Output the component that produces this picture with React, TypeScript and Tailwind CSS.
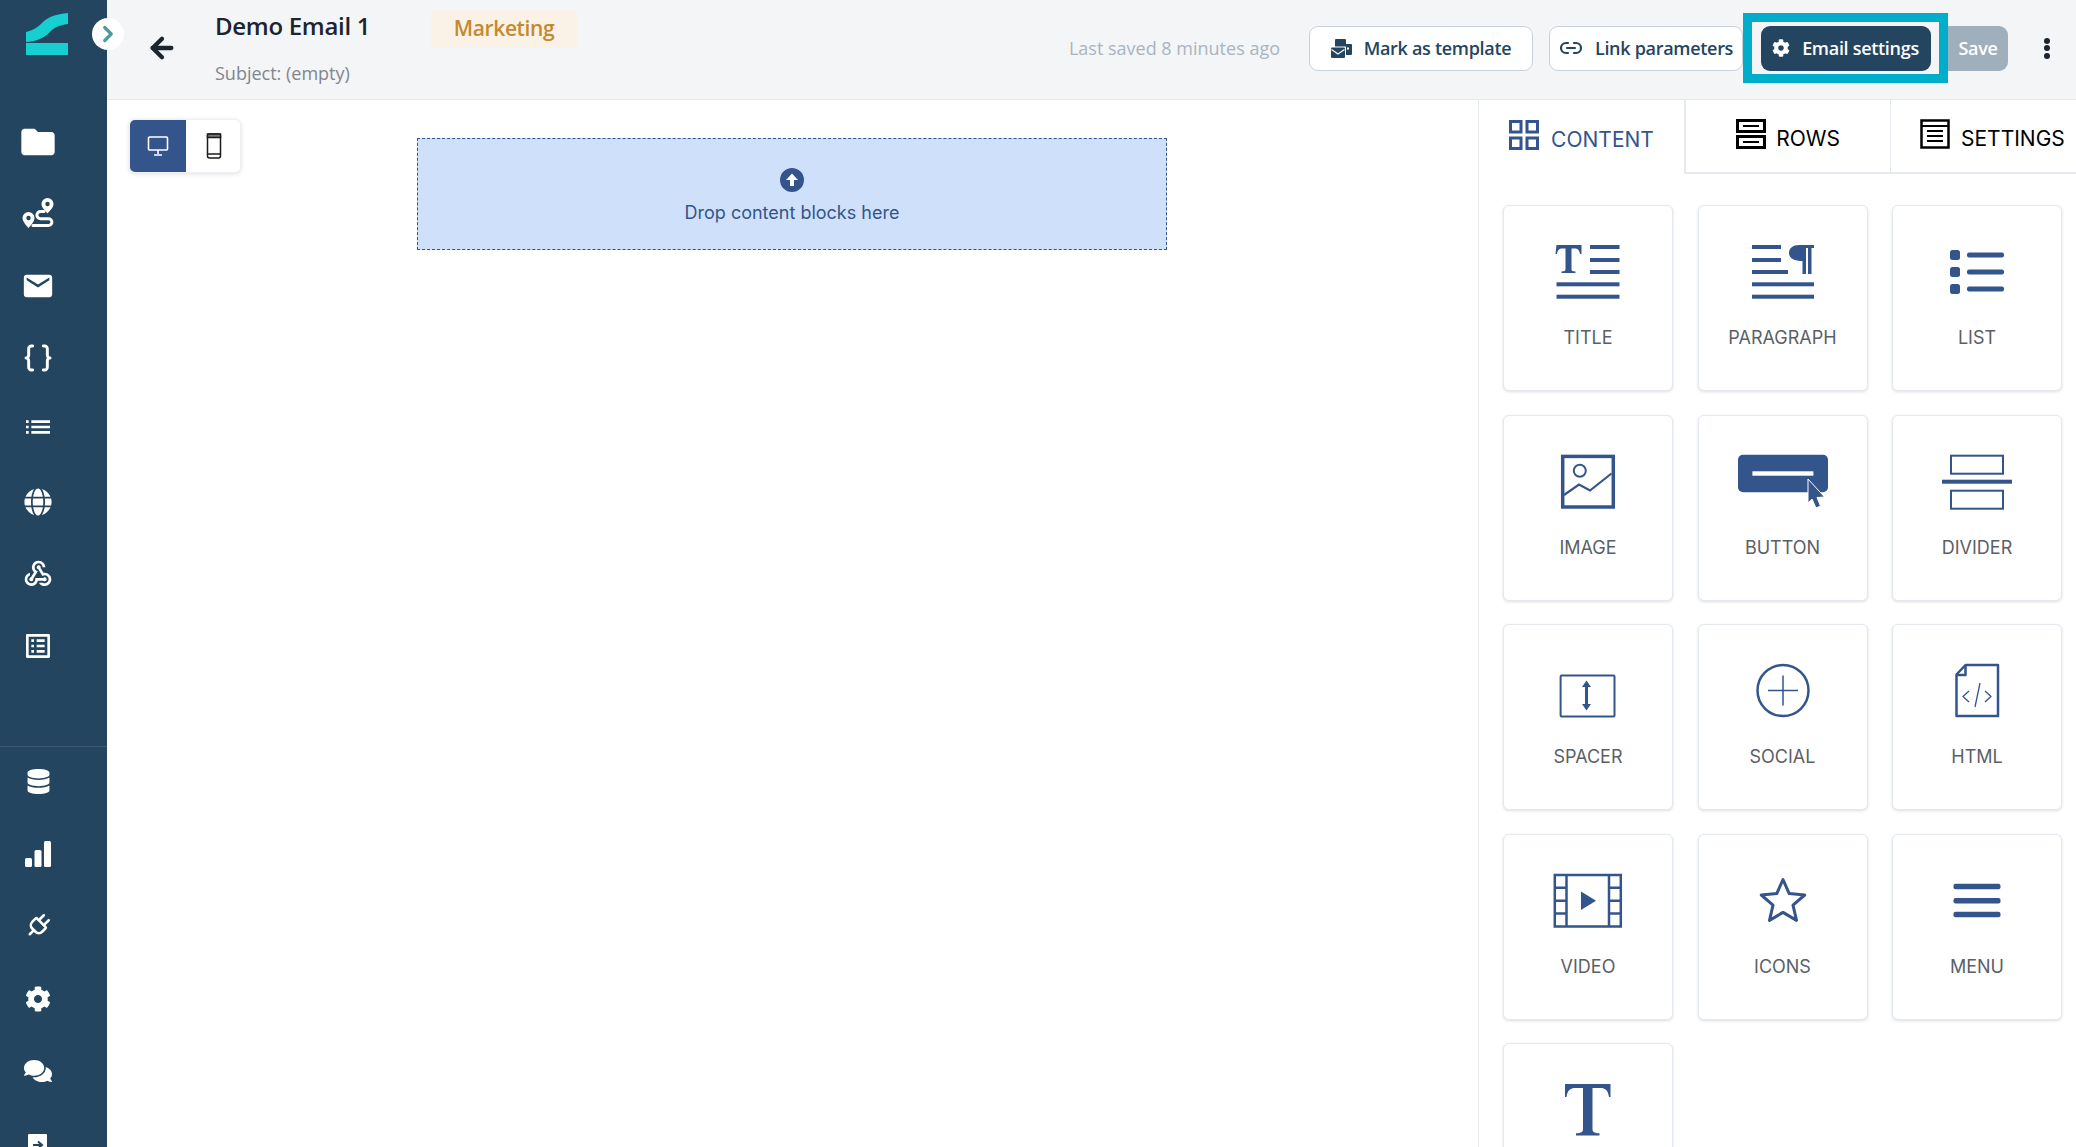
import React from 'react';
import { ArrowLeft, Braces, ChevronRight, Link2, Plug } from 'lucide-react';
import { FaCog, FaComments, FaDatabase, FaGlobe } from 'react-icons/fa';
import { MdEmail, MdFolder, MdList, MdOutlineListAlt, MdWebhook } from 'react-icons/md';

const BLUE = '#34558b';

const RouteIcon = () => (
  <svg viewBox="0 0 32 32" className="h-[32px] w-[32px]" fill="none">
    <path d="M6.5 14a6 6 0 0 0-6 6c0 3.6 4 7.6 6 10 2-2.4 6-6.4 6-10a6 6 0 0 0-6-6Z" fill="#fff" />
    <circle cx="6.5" cy="20" r="2.2" fill="#24455f" />
    <path d="M25.500 0a6 6 0 0 0-6 6c0 3.600 4 7 6 9.500 2-2.500 6-5.900 6-9.500a6 6 0 0 0-6-6Z" fill="#fff" />
    <circle cx="25.500" cy="6" r="2.200" fill="#24455f" />
    <path d="M22 13.500h-3.500a3.600 3.600 0 0 0 0 7.200h8a2.800 2.800 0 0 1 0 6.800H11" stroke="#fff" strokeWidth="3" strokeLinecap="round" />
  </svg>
);

const BarsIcon = () => (
  <svg viewBox="0 0 28 28" className="h-[28px] w-[28px]" fill="#fff">
    <rect x="1" y="18" width="7" height="9" rx="1.500" />
    <rect x="10.500" y="10" width="7" height="17" rx="1.500" />
    <rect x="20" y="1" width="7" height="26" rx="1.500" />
  </svg>
);

const ExitIcon = () => (
  <svg viewBox="0 0 20 20" className="h-[20px] w-[20px]">
    <rect x="0" y="0" width="19" height="20" rx="1" fill="#fff" />
    <path d="M5 11h8M10 7.500l4 3.500-4 3.500" stroke="#24455f" strokeWidth="2" fill="none" />
  </svg>
);

const Logo = () => (
  <svg viewBox="0 0 42 42" className="h-[42px] w-[42px]" fill="#15cfd0">
    <path d="M0 19C8 17 12 14 17 9 22 4 30 1 42 0v11C33 12 27 15 23 20 17 26 9 28.500 0 29Z" />
    <rect x="0" y="30" width="42" height="12" />
  </svg>
);

const TemplateIcon = () => (
  <svg viewBox="0 0 21 19" className="h-[19px] w-[21px]" fill="#24455f">
    <path d="M4 1a1 1 0 0 1 1-1h9a1 1 0 0 1 1 1v4h5a1 1 0 0 1 1 1v9a1 1 0 0 1-1 1h-5V7.500H4Z" />
    <rect x="0" y="8.500" width="14" height="10.500" rx="1" />
    <path d="M0.500 10.500 7 15l6.500-4.500" stroke="#fff" strokeWidth="1.200" fill="none" />
    <rect x="16" y="8.500" width="2" height="2" fill="#fff" />
  </svg>
);

const ContentTabIcon = ({ color }: { color: string }) => (
  <svg viewBox="0 0 30 30" className="h-[30px] w-[30px] -translate-y-[5px]" fill="none" stroke={color} strokeWidth="3">
    <rect x="1.500" y="1.500" width="10.500" height="10.500" />
    <rect x="18" y="1.500" width="10.500" height="10.500" />
    <rect x="1.500" y="18" width="10.500" height="10.500" />
    <rect x="18" y="18" width="10.500" height="10.500" />
  </svg>
);

const RowsTabIcon = () => (
  <svg viewBox="0 0 30 30" className="h-[30px] w-[30px] -translate-y-[5px]" fill="none" stroke="#000" strokeWidth="3">
    <rect x="1.500" y="1.500" width="27" height="11" />
    <rect x="1.500" y="17.500" width="27" height="11" />
    <path d="M7 7h16M7 23h16" strokeWidth="2" />
  </svg>
);

const SettingsTabIcon = () => (
  <svg viewBox="0 0 30 30" className="h-[30px] w-[30px] -translate-y-[5px]" fill="none" stroke="#000" strokeWidth="2.500">
    <rect x="1.500" y="1.500" width="27" height="27" />
    <path d="M1.500 7h27" strokeWidth="2" />
    <path d="M7 12h16M7 17h16M7 22h16" strokeWidth="2" />
  </svg>
);

const IconBox = ({ children }: { children: React.ReactNode }) => (
  <svg viewBox="0 0 100 76" className="h-[76px] w-[100px]" fill={BLUE}>{children}</svg>
);

const Lines = () => (
  <>
    <rect x="19" y="48.300" width="62" height="4" />
    <rect x="19" y="60.700" width="62" height="4" />
  </>
);

const blockIcons: Record<string, React.ReactNode> = {
  TITLE: (
    <>
      <path d="M18.500 11h25v9h-1.500c-.5-3.500-2-5.500-5.500-5.500h-3V35c0 2 1 2.300 4 2.500V39h-14v-1.500c3-.2 4-.5 4-2.500V14.500h-3c-3.500 0-5 2-5.500 5.500h-1.500Z" />
      <rect x="52" y="11" width="29.500" height="4" />
      <rect x="52" y="24" width="29.500" height="4" />
      <rect x="52" y="36" width="29.500" height="4" />
      <rect x="18.500" y="48.300" width="63" height="4" />
      <rect x="18.500" y="60.700" width="63" height="4" />
    </>
  ),
  PARAGRAPH: (
    <>
      <rect x="19" y="11" width="29" height="4" />
      <rect x="19" y="24" width="29" height="4" />
      <rect x="19" y="36" width="36" height="4" />
      <path d="M66 11h15v3h-2.500v26H75V14h-2v26h-3.500V27C61 27 56 24 56 19c0-5 4-8 10-8Z" />
      <Lines />
    </>
  ),
  LIST: (
    <>
      <rect x="23" y="16" width="10" height="10" rx="2.500" />
      <rect x="23" y="33" width="10" height="10" rx="2.500" />
      <rect x="23" y="50" width="10" height="10" rx="2.500" />
      <rect x="40" y="18.500" width="37" height="5" rx="2" />
      <rect x="40" y="35.500" width="37" height="5" rx="2" />
      <rect x="40" y="52.500" width="37" height="5" rx="2" />
    </>
  ),
  IMAGE: (
    <g fill="none" stroke={BLUE}>
      <rect x="24.700" y="12.400" width="50.600" height="50.600" strokeWidth="3.500" />
      <circle cx="41.800" cy="26.700" r="6" strokeWidth="2" />
      <path d="M26 51l15-10.500 11 6 21.500-17" strokeWidth="2.200" />
    </g>
  ),
  BUTTON: (
    <>
      <rect x="5" y="10.700" width="90" height="37.600" rx="5" />
      <rect x="19.400" y="27.300" width="61" height="4.400" fill="#fff" />
      <path d="M75 35 91.500 53 84 53.500 87.500 62 83 64 79 55 75 59Z" stroke="#fff" strokeWidth="1" />
    </>
  ),
  DIVIDER: (
    <>
      <rect x="24" y="11.700" width="52" height="18" fill="none" stroke={BLUE} strokeWidth="2" />
      <rect x="15" y="35.700" width="70" height="4" />
      <rect x="24" y="46.700" width="52" height="18" fill="none" stroke={BLUE} strokeWidth="2" />
    </>
  ),
  SPACER: (
    <>
      <rect x="22.600" y="22.400" width="53.900" height="41" fill="none" stroke={BLUE} strokeWidth="2" rx="1" />
      <path d="M48.500 27.500 53 34h-3v17h3l-4.500 6.500L44 51h3V34h-3Z" />
    </>
  ),
  SOCIAL: (
    <g fill="none" stroke={BLUE}>
      <circle cx="50" cy="37.500" r="25.500" strokeWidth="2.500" />
      <path d="M35 37.500h30M50 22.500v30" strokeWidth="1.500" />
    </g>
  ),
  HTML: (
    <g fill="none" stroke={BLUE} strokeLinejoin="round">
      <path d="M38.500 12H71v51H29.500V21.500Z" strokeWidth="2.500" />
      <path d="M38.500 12v10h-9" strokeWidth="2.500" />
      <path d="M42 38l-6 5.500 6 5.500M58 38l6 5.500-6 5.500M53 30l-5 24" strokeWidth="1.300" />
    </g>
  ),
  VIDEO: (
    <>
      <g fill="none" stroke={BLUE} strokeWidth="2.500">
        <rect x="16.800" y="12" width="66" height="51.500" />
        <path d="M28.500 12v51.500M71 12v51.500M16.800 24.800h11.700M16.800 37.700h11.700M16.800 50.600h11.700M71 24.800h11.800M71 37.700h11.800M71 50.600h11.800" />
      </g>
      <path d="M43 28.500 58 37.700 43 47Z" />
    </>
  ),
  ICONS: (
    <path d="M50 16.500 56.200 30.600 71.700 32 60 42.100 63.500 57.400 50 49.400 36.500 57.400 40 42.100 28.300 32 43.800 30.600Z" fill="none" stroke={BLUE} strokeWidth="3" strokeLinejoin="round" />
  ),
  MENU: (
    <>
      <rect x="26.500" y="20.700" width="47" height="5.500" rx="2" />
      <rect x="26.500" y="35" width="47" height="5.500" rx="2" />
      <rect x="26.500" y="48.700" width="47" height="5.500" rx="2" />
    </>
  ),
  FONT: (
    <path d="M27 12h45.500v13h-1.500c-1-6.500-3.500-9-9-9h-7.500v41c0 3 1.500 4 7 4.300v2.200H38v-2.200c5.500-.3 7-1.300 7-4.300V16h-7.500c-5.500 0-8 2.500-9 9H27Z" />
  ),
};

const blocks = ['TITLE', 'PARAGRAPH', 'LIST', 'IMAGE', 'BUTTON', 'DIVIDER', 'SPACER', 'SOCIAL', 'HTML', 'VIDEO', 'ICONS', 'MENU'];

const BlockCard = ({ name, label }: { name: string; label?: string }) => (
  <div className="flex h-[186px] flex-col items-center rounded-[6px] border border-[#e4e8ef] bg-white pt-[28px] shadow-[0_1px_3px_rgba(40,50,70,0.16)]">
    <IconBox>{blockIcons[name]}</IconBox>
    {label && <div className="mt-[17px] font-['Inter'] text-[18px] leading-[22px] text-[#5b5f66]">{label}</div>}
  </div>
);

const topNav = [
  <MdFolder key="folder" className="h-[40px] w-[40px]" />,
  <RouteIcon key="route" />,
  <MdEmail key="mail" className="h-[34px] w-[34px]" />,
  <Braces key="braces" className="h-[32px] w-[32px]" strokeWidth={2.2} />,
  <MdList key="list" className="h-[32px] w-[32px] -translate-y-[3px]" />,
  <FaGlobe key="globe" className="h-[28px] w-[28px]" />,
  <MdWebhook key="webhook" className="h-[32px] w-[32px]" />,
  <MdOutlineListAlt key="table" className="h-[32px] w-[32px]" />,
];

const bottomNav = [
  <FaDatabase key="db" className="h-[25px] w-[25px]" />,
  <BarsIcon key="bars" />,
  <Plug key="plug" className="h-[28px] w-[28px] rotate-45" strokeWidth={2.2} />,
  <FaCog key="gear" className="h-[26px] w-[26px]" />,
  <FaComments key="chat" className="h-[28px] w-[28px]" />,
  <ExitIcon key="exit" />,
];

export default function App() {
  return (
    <div className="relative flex h-screen w-full overflow-hidden bg-white font-['Open_Sans',sans-serif]">
      <aside className="flex w-[107px] shrink-0 flex-col bg-[#24455f] text-white">
        <div className="ml-[26px] mt-[13px] h-[42px] w-[42px]">
          <Logo />
        </div>
        <div className="mt-[51px] flex w-[76px] flex-col items-center">
          {topNav.map((icon, i) => (
            <div key={i} className="flex h-[72px] w-full items-center justify-center">{icon}</div>
          ))}
        </div>
        <div className="mt-[64px] w-full border-t border-[#3c5a73]" />
        <div className="-mt-[2px] flex w-[76px] flex-col items-center">
          {bottomNav.map((icon, i) => (
            <div key={i} className="flex h-[72.500px] w-full shrink-0 items-center justify-center">{icon}</div>
          ))}
        </div>
      </aside>

      {/* collapse handle sits over the sidebar edge */}
      <div className="absolute left-[92px] top-[18px] z-10 flex h-[32px] w-[32px] items-center justify-center rounded-full bg-white">
        <ChevronRight className="h-[26px] w-[26px] text-[#4f9a9c]" strokeWidth={3} />
      </div>

      <div className="flex min-w-0 flex-1 flex-col">
        <header className="flex h-[100px] shrink-0 border-b border-[#e6e9ed] bg-[#f4f5f7] pl-[39px]">
          <div className="flex h-[95px] items-center">
            <ArrowLeft className="h-[32px] w-[32px] text-[#1c2430]" strokeWidth={3.2} />
          </div>
          <div className="ml-[37px] w-[216px] shrink-0">
            <div className="mt-[10px] text-[24px] font-semibold leading-[32px] tracking-[-0.3px] text-[#1c2430]">Demo Email 1</div>
            <div className="mt-[18px] text-[18px] leading-[26px] text-[#80868f]">Subject: (empty)</div>
          </div>
          <div className="mt-[10px] flex h-[38px] w-[146px] items-center justify-center rounded-[3px] bg-[#faf2e6] text-[21px] font-semibold tracking-[-0.4px] text-[#c48a30]">Marketing</div>
          <div className="ml-auto flex h-[96px] items-center pr-[26px]">
            <span className="mr-[29px] text-[18px] text-[#a9b4c0]">Last saved 8 minutes ago</span>
            <button className="flex h-[45px] w-[224px] items-center justify-center gap-[12px] rounded-[9px] border border-[#c8d2dc] bg-white text-[18px] font-semibold tracking-[-0.3px] text-[#24455f]">
              <TemplateIcon />
              Mark as template
            </button>
            <button className="ml-[16px] flex h-[45px] w-[194px] items-center justify-center gap-[12px] rounded-[9px] border border-[#c8d2dc] bg-white text-[18px] font-semibold tracking-[-0.3px] text-[#24455f]">
              <Link2 className="h-[24px] w-[24px]" strokeWidth={2.2} />
              Link parameters
            </button>
            <div className="flex h-[70px] w-[205px] items-center justify-center border-[9px] border-[#00aecb]">
              <button className="flex h-[45px] w-[170px] shrink-0 items-center justify-center gap-[12px] rounded-[9px] bg-[#24455f] text-[18px] font-semibold tracking-[-0.3px] text-white">
                <FaCog className="h-[18px] w-[18px]" />
                Email settings
              </button>
            </div>
            <button className="flex h-[45px] w-[60px] items-center justify-center rounded-r-[9px] bg-[#a0afbc] text-[18px] font-semibold tracking-[-0.3px] text-white">Save</button>
            <div className="ml-[36px] flex flex-col gap-[1.500px]">
              <span className="h-[6px] w-[6px] rounded-full bg-[#1c2430]" />
              <span className="h-[6px] w-[6px] rounded-full bg-[#1c2430]" />
              <span className="h-[6px] w-[6px] rounded-full bg-[#1c2430]" />
            </div>
          </div>
        </header>

        <div className="flex min-h-0 flex-1">
          <main className="flex min-w-0 flex-1 items-start pl-[22px] pt-[19px]">
            <div className="flex h-[54px] w-[112px] shrink-0 overflow-hidden rounded-[6px] border border-[#eef0f3] bg-white shadow-[0_1px_4px_rgba(40,50,70,0.15)]">
              <div className="flex w-[56px] items-center justify-center bg-[#34558b]">
                <svg viewBox="0 0 22 22" className="h-[22px] w-[22px]" fill="none" stroke="#fff">
                  <rect x="1.500" y="2" width="19" height="13" rx="1" strokeWidth="1.600" />
                  <path d="M11 15v4M7 20h8" strokeWidth="1.600" />
                </svg>
              </div>
              <div className="flex flex-1 items-center justify-center pl-[2px]">
                <svg viewBox="0 0 16 26" className="h-[26px] w-[16px]" fill="none" stroke="#1b1b1b" strokeWidth="1.500">
                  <rect x="1.500" y="1" width="13" height="24" rx="2" />
                  <rect x="1.500" y="1" width="13" height="3.500" fill="#777" />
                  <path d="M1.500 21h13" />
                </svg>
              </div>
            </div>
            <div className="ml-[176px] mt-[19px] flex h-[112px] w-[750px] shrink-0 flex-col items-center border border-dashed border-[#34558b] bg-[#cfe0fb] pt-[29px]">
              <svg viewBox="0 0 24 24" className="h-[24px] w-[24px]">
                <circle cx="12" cy="12" r="12" fill="#34558b" />
                <path d="M12 5.500 18 12h-4v6h-4v-6H6Z" fill="#fff" />
              </svg>
              <div className="mt-[9px] font-['Inter'] text-[18px] leading-[24px] text-[#34558b]">Drop content blocks here</div>
            </div>
          </main>

          <section className="w-[598px] shrink-0 border-l border-[#e6e9ed]">
            <div className="flex h-[74px]">
              <div className="flex w-[205px] items-center justify-center gap-[12px] pt-[5px] font-['Inter'] text-[21px] text-[#34558b]">
                <ContentTabIcon color={BLUE} />
                CONTENT
              </div>
              <div className="flex w-[206px] items-center justify-center gap-[10px] border-b-2 border-l-2 border-[#e6e9ed] pt-[5px] font-['Inter'] text-[21px] text-black">
                <RowsTabIcon />
                ROWS
              </div>
              <div className="flex flex-1 items-center gap-[11px] border-b-2 border-l border-[#e6e9ed] pl-[29px] pt-[5px] font-['Inter'] text-[21px] text-black">
                <SettingsTabIcon />
                SETTINGS
              </div>
            </div>
            <div className="grid grid-cols-[repeat(3,170px)] gap-x-[24.500px] gap-y-[23.500px] pl-[24px] pt-[31px]">
              {blocks.map((name) => (
                <BlockCard key={name} name={name} label={name} />
              ))}
              <BlockCard name="FONT" />
            </div>
          </section>
        </div>
      </div>
    </div>
  );
}
